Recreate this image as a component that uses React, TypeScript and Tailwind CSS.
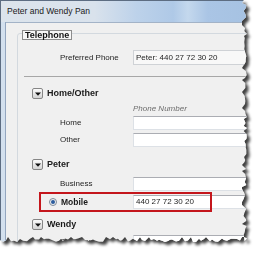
import React from "react";

// jagged "torn paper" outline for the right and bottom edges
function tornClip(w: number, h: number) {
  let seed = 11;
  const rnd = () => {
    seed = (seed * 9301 + 49297) % 233280;
    return seed / 233280;
  };
  const pts: string[] = ["0px 0px"];
  for (let y = 0; y <= h; y += 2 + Math.round(rnd() * 2)) {
    const d = rnd() < 0.15 ? 5 : rnd() * 3.5;
    pts.push(`${(w - d).toFixed(1)}px ${y}px`);
  }
  for (let x = w; x >= 0; x -= 2 + Math.round(rnd() * 2)) {
    const d = rnd() < 0.15 ? 5 : rnd() * 3.5;
    pts.push(`${x}px ${(h - d).toFixed(1)}px`);
  }
  pts.push(`0px ${h - 3}px`);
  return `polygon(${pts.join(",")})`;
}

function Expander() {
  return (
    <span className="flex h-[11px] w-[11px] shrink-0 items-center justify-center rounded-[2px] border border-[#868686] bg-[linear-gradient(#fbfbfb,#d4d4d4)]">
      <svg width="6" height="4" viewBox="0 0 6 4">
        <path d="M0 0.5h6L3 3.8z" fill="#111" />
      </svg>
    </span>
  );
}

function Section({ title, className = "" }: { title: string; className?: string }) {
  return (
    <div className={"ml-[14px] flex h-[11px] items-center gap-[4px] " + className}>
      <Expander />
      <span className="text-[9px] font-bold leading-none text-[#1a1a1a]">{title}</span>
    </div>
  );
}

function Field({
  label,
  value = "",
  className = "",
}: {
  label: string;
  value?: string;
  className?: string;
}) {
  return (
    <div className={"flex h-[14px] items-center " + className}>
      <span className="w-[115px] shrink-0 pl-[42px] text-[8px] leading-none text-[#1e1e1e]">{label}</span>
      <div className="h-[14px] flex-1 border border-[#dde1e6] border-t-[#abadb3] bg-white px-[2px] text-[8px] leading-[12px] text-[#1e1e1e]">
        {value}
      </div>
    </div>
  );
}

export default function App() {
  const clip = tornClip(247, 242);

  return (
    <div className="h-[257px] w-[260px] overflow-hidden bg-white font-['Liberation_Sans',Arial,sans-serif]">
      <div className="h-[248px] w-[254px] drop-shadow-[3px_3px_1.5px_rgba(0,0,0,0.75)]">
        <div
          style={{ clipPath: clip }}
          className="flex h-[242px] w-[247px] flex-col border-l border-t border-[#5d6d82] bg-[#f0f0f0]"
        >
          {/* title bar */}
          <div className="flex h-[21px] shrink-0 items-center bg-[linear-gradient(90deg,#dce4ec_0%,#d9e2ec_38%,#bdd2ea_55%,#afc9e7_70%,#c4d8ed_76%,#aac5e5_84%,#a6c2e2_100%)] pl-[6px] text-[8.5px] leading-none text-[#1a1a1a]">
            Peter and Wendy Pan
          </div>

          <div className="flex min-h-0 flex-1">
            {/* left window frame */}
            <div className="w-[5px] shrink-0 border-r border-[#93a6bf] bg-[#d3e0ee]" />

            <div className="min-w-0 flex-1 overflow-hidden border-t border-[#a3b3c7]">
              {/* Telephone group */}
              <div className="ml-[11px] mt-[10px] w-[250px] rounded-[3px] border border-[#d3d9df] pb-[20px]">
                <div className="-mt-[4px] ml-[4px] w-fit border border-[#8d8d8d] bg-[#f7f7f7] px-[2px] text-[9px] font-bold leading-[8px] text-[#111]">
                  Telephone
                </div>

                <div className="mt-[10px] flex h-[15px] items-center">
                  <span className="w-[115px] shrink-0 pl-[42px] text-[8px] leading-none text-[#1e1e1e]">
                    Preferred Phone
                  </span>
                  <div className="h-[15px] flex-1 border border-[#cfd2d6] bg-[#f8f8f8] px-[2px] text-[8px] leading-[13px] text-[#1e1e1e]">
                    Peter: 440 27 72 30 20
                  </div>
                </div>

                <div className="ml-[6px] mt-[11px] h-px bg-[#a7a7a7]" />

                <Section title="Home/Other" className="mt-[11px]" />
                <div className="mt-[5px] flex h-[10px] items-center pl-[115px] text-[8px] italic leading-none text-[#6d6d6d]">
                  Phone Number
                </div>
                <Field label="Home" className="mt-[2px]" />
                <Field label="Other" className="mt-[3px]" />

                <Section title="Peter" className="mt-[12px]" />
                <Field label="Business" className="mt-[7px]" />

                <div className="relative mt-[4px] flex h-[14px] items-center">
                  <span className="flex w-[115px] shrink-0 items-center gap-[4px] pl-[31px]">
                    <span className="flex h-[8px] w-[8px] items-center justify-center rounded-full border border-[#7b8898] bg-[#f2f2f2]">
                      <span className="h-[4px] w-[4px] rounded-full bg-[#2b5c9e]" />
                    </span>
                    <span className="text-[8.5px] font-bold leading-none text-[#1a1a1a]">Mobile</span>
                  </span>
                  <div className="h-[14px] flex-1 border border-[#dde1e6] border-t-[#abadb3] bg-white px-[2px] text-[8px] leading-[12px] text-[#1e1e1e]">
                    440 27 72 30 20
                  </div>
                  {/* highlight annotation */}
                  <div className="absolute left-[21px] top-[-3px] h-[20px] w-[173px] border-2 border-[#c4161c]" />
                </div>

                <Section title="Wendy" className="mt-[10px]" />
                <Field label="Business" className="mt-[5px]" />
              </div>
            </div>
          </div>
        </div>
      </div>
    </div>
  );
}
